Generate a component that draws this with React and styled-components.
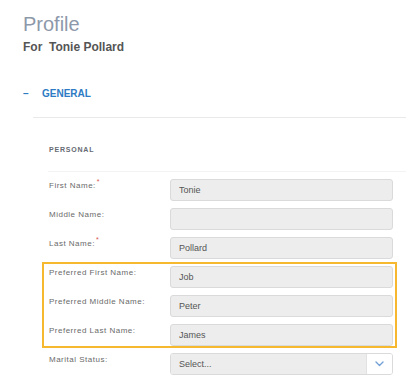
import React from "react";
import styled, { createGlobalStyle } from "styled-components";

const GlobalStyle = createGlobalStyle`
  html, body {
    margin: 0;
    padding: 0;
    background: #ffffff;
    font-family: "Liberation Sans", Arial, sans-serif;
  }
`;

export default function App() {
  /* the three preferred-name rows are boxed in the reference */
  const nameFields = [
    { label: "First Name:", value: "Tonie", required: true },
    { label: "Middle Name:", value: "" },
    { label: "Last Name:", value: "Pollard", required: true },
  ];
  const preferredFields = [
    { label: "Preferred First Name:", value: "Job" },
    { label: "Preferred Middle Name:", value: "Peter" },
    { label: "Preferred Last Name:", value: "James" },
  ];

  const renderRow = (field) => (
    <Row key={field.label}>
      <Label>
        {field.label}
        {field.required && <Required>*</Required>}
      </Label>
      <Input readOnly value={field.value} />
    </Row>
  );

  return (
    <Page>
      <GlobalStyle />
      <Title>Profile</Title>
      <Subtitle>For  Tonie Pollard</Subtitle>
      <Toggle>
        <span className="dash">–</span>
        <span>GENERAL</span>
      </Toggle>
      <SectionBody>
        <SubHeading>PERSONAL</SubHeading>
        <SubDivider />
        <Form>
          {nameFields.map(renderRow)}
          <Highlight>{preferredFields.map(renderRow)}</Highlight>
          <Row>
            <Label>Marital Status:</Label>
            <Select>
              <span className="value">Select...</span>
              <span className="caret">
                <svg width="9" height="6" viewBox="0 0 9 6" fill="none">
                  <path
                    d="M1 1l3.5 3.5L8 1"
                    stroke="#6f9fd4"
                    strokeWidth="1.3"
                    strokeLinecap="round"
                    strokeLinejoin="round"
                  />
                </svg>
              </span>
            </Select>
          </Row>
        </Form>
      </SectionBody>
    </Page>
  );
}

const Page = styled.div`
  padding: 13px 0 0 23px;
  min-height: 387px;
  box-sizing: border-box;
`;

const Title = styled.h1`
  margin: 0;
  font-size: 20px;
  line-height: 23px;
  font-weight: normal;
  color: #8d99aa;
`;

const Subtitle = styled.div`
  margin-top: 4px;
  font-size: 12px;
  line-height: 14px;
  font-weight: bold;
  color: #555;
  white-space: pre;
`;

const Toggle = styled.div`
  margin-top: 34px;
  display: flex;
  gap: 14px;
  font-size: 10px;
  line-height: 12px;
  font-weight: bold;
  color: #2d7bc4;
  .dash {
    width: 5px;
  }
`;

const SectionBody = styled.div`
  margin: 17px 0 0 10px;
  border-top: 1px solid #e9e9e9;
  padding: 27px 0 20px 15px;
`;

const SubHeading = styled.div`
  padding-left: 1px;
  font-size: 7px;
  line-height: 9px;
  font-weight: bold;
  letter-spacing: 0.8px;
  color: #666b73;
`;

const SubDivider = styled.div`
  margin-top: 17px;
  height: 1px;
  background: #f3f3f3;
`;

const Form = styled.div`
  margin-top: 7px;
  padding-left: 1px;
  display: flex;
  flex-direction: column;
  gap: 7px;
`;

const Highlight = styled.div`
  position: relative;
  width: 344px;
  display: flex;
  flex-direction: column;
  gap: 7px;
  &::before {
    content: "";
    position: absolute;
    top: -4px;
    left: -7px;
    right: -4px;
    bottom: -2px;
    border: 2px solid #f5b82e;
    pointer-events: none;
  }
`;

const Row = styled.div`
  display: grid;
  grid-template-columns: 121px 223px;
  align-items: start;
`;

const Label = styled.div`
  padding-top: 2px;
  font-size: 8px;
  line-height: 10px;
  letter-spacing: 0.5px;
  color: #6a6a6a;
`;

const Required = styled.sup`
  color: #d9534f;
  font-size: 7px;
  line-height: 0;
  margin-left: 1px;
`;

const Input = styled.input`
  box-sizing: border-box;
  width: 223px;
  height: 22px;
  margin: 0;
  padding: 0 8px;
  border: 1px solid #dadada;
  border-radius: 3px;
  background: #ededed;
  font-family: "Liberation Sans", Arial, sans-serif;
  font-size: 9px;
  color: #555;
  outline: none;
`;

const Select = styled.div`
  box-sizing: border-box;
  width: 223px;
  height: 22px;
  display: flex;
  border: 1px solid #dadada;
  border-radius: 3px;
  overflow: hidden;
  font-size: 9px;
  color: #555;
  .value {
    flex: 1;
    display: flex;
    align-items: center;
    padding: 0 8px;
    background: #ededed;
  }
  .caret {
    width: 25px;
    display: flex;
    align-items: center;
    justify-content: center;
    background: #fff;
    border-left: 1px solid #e2e2e2;
  }
`;
